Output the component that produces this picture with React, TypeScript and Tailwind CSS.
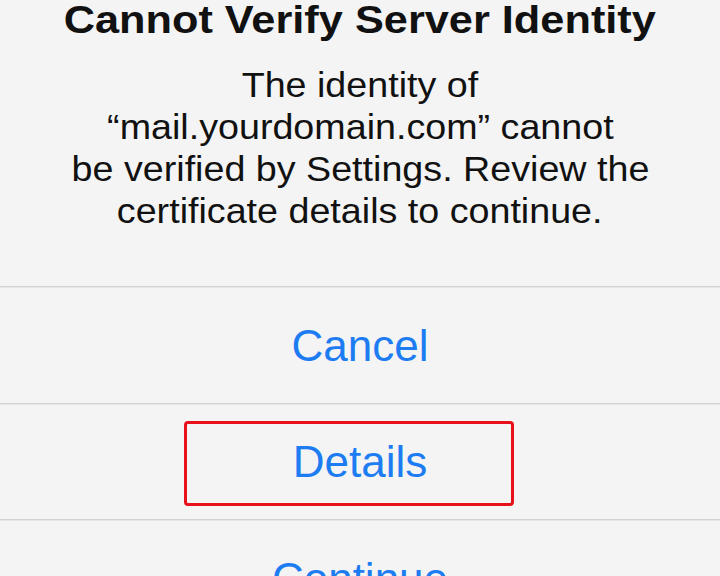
export default function App() {
  const font = { fontFamily: '"Liberation Sans", Arial, Helvetica, sans-serif' };

  const Separator = () => (
    <div className="shrink-0">
      <div className="h-px bg-[#d3d3d3]" />
      <div className="h-px bg-[#e6e6e6]" />
    </div>
  );

  return (
    <div
      className="w-[720px] h-[576px] overflow-hidden bg-[#f4f4f4] text-[#111111] flex flex-col"
      style={font}
    >
      {/* Title + message */}
      <div className="shrink-0 flex flex-col items-center text-center">
        <h1 className="-mt-[2px] text-[38px] leading-[44px] font-bold whitespace-nowrap">
          <span className="inline-block scale-x-[1.14]">Cannot Verify Server Identity</span>
        </h1>
        <p className="mt-[22px] text-[35px] leading-[42px] whitespace-nowrap">
          <span className="inline-block scale-x-[1.076]">The identity of</span>
          <br />
          <span className="inline-block scale-x-[1.076]">“mail.yourdomain.com” cannot</span>
          <br />
          <span className="inline-block scale-x-[1.076]">be verified by Settings. Review the</span>
          <br />
          <span className="inline-block scale-x-[1.076]">certificate details to continue.</span>
        </p>
        <div className="h-[54px]" />
      </div>

      <Separator />

      {/* Buttons */}
      <button className="h-[115px] shrink-0 flex items-center justify-center text-[44px] leading-none text-[#1d7cf2]">
        Cancel
      </button>

      <Separator />

      <div className="relative h-[114px] shrink-0 flex items-center justify-center">
        <button className="text-[44px] leading-none text-[#1d7cf2]">Details</button>
        <div className="absolute left-[184px] top-[16px] w-[330px] h-[85px] border-[3px] border-[#e8101a] rounded-[4px]" />
      </div>

      <Separator />

      <button className="h-[116px] shrink-0 flex items-center justify-center text-[44px] leading-none text-[#1d7cf2]">
        Continue
      </button>
    </div>
  );
}
